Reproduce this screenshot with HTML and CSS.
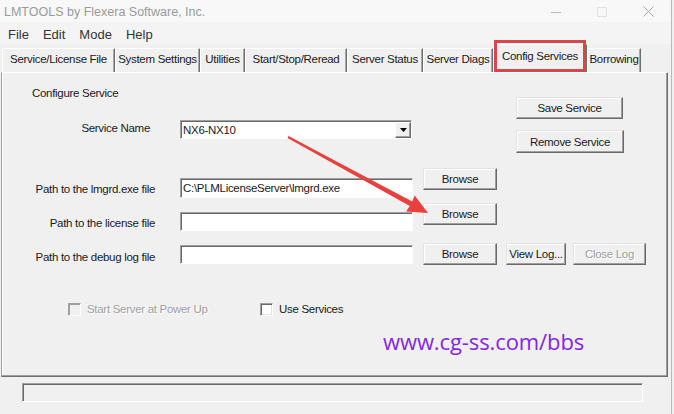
FILE: index.html
```html
<!DOCTYPE html>
<html lang="en">
<head>
<meta charset="utf-8">
<title>LMTOOLS</title>
<link rel="stylesheet" href="styles.css">
</head>
<body>
<div class="window">
  <header class="titlebar">
    <span class="title">LMTOOLS by Flexera Software, Inc.</span>
    <div class="controls">
      <span class="ctl"><svg width="10" height="10" viewBox="0 0 10 10"><line x1="0" y1="5.5" x2="10" y2="5.5" stroke="#b8b8b8" stroke-width="1"/></svg></span>
      <span class="ctl"><svg width="10" height="10" viewBox="0 0 10 10"><rect x="0.5" y="0.5" width="9" height="9" fill="none" stroke="#e2e2e2" stroke-width="1"/></svg></span>
      <span class="ctl"><svg width="11" height="11" viewBox="0 0 11 11"><path d="M0.5 0.5 L10.5 10.5 M10.5 0.5 L0.5 10.5" stroke="#a8a8a8" stroke-width="1" fill="none"/></svg></span>
    </div>
  </header>
  <nav class="menubar">
    <span class="menu-item">File</span>
    <span class="menu-item">Edit</span>
    <span class="menu-item">Mode</span>
    <span class="menu-item">Help</span>
  </nav>
  <div class="tabs">
    <div class="tab">Service/License File</div>
    <div class="tab">System Settings</div>
    <div class="tab">Utilities</div>
    <div class="tab">Start/Stop/Reread</div>
    <div class="tab">Server Status</div>
    <div class="tab">Server Diags</div>
    <div class="tab tab-active">Config Services</div>
    <div class="tab">Borrowing</div>
  </div>
  <section class="panel">
    <div class="top">
      <div class="top-left">
        <div class="heading">Configure Service</div>
        <div class="service-row">
          <span class="lbl lbl-service">Service Name</span>
          <div class="combo">
            <span class="combo-text">NX6-NX10</span>
            <span class="combo-btn"><svg width="7" height="4" viewBox="0 0 7 4"><path d="M0 0H7L3.5 4Z" fill="#000"/></svg></span>
          </div>
        </div>
      </div>
      <div class="top-right">
        <div class="btn btn-save">Save Service</div>
        <div class="btn btn-remove">Remove Service</div>
      </div>
    </div>
    <div class="path-row row1">
      <span class="lbl">Path to the lmgrd.exe file</span>
      <div class="field">C:\PLMLicenseServer\lmgrd.exe</div>
      <div class="btn btn-browse">Browse</div>
    </div>
    <div class="path-row row2">
      <span class="lbl">Path to the license file</span>
      <div class="field"></div>
      <div class="btn btn-browse">Browse</div>
    </div>
    <div class="path-row row3">
      <span class="lbl">Path to the debug log file</span>
      <div class="field"></div>
      <div class="btn btn-browse">Browse</div>
      <div class="btn btn-view">View Log...</div>
      <div class="btn btn-close btn-disabled">Close Log</div>
    </div>
    <div class="check-row">
      <label class="check-item check-item-first disabled"><span class="check check-disabled"></span><span class="check-text">Start Server at Power Up</span></label>
      <label class="check-item"><span class="check"></span><span class="check-text">Use Services</span></label>
    </div>
    <div class="watermark">www.cg-ss.com/bbs</div>
  </section>
  <footer class="statusbar"><div class="status-box"></div></footer>
  <svg class="annot" width="674" height="414" viewBox="0 0 674 414">
    <polygon points="288.5,136.1 412.2,201.6 414.7,195.6 428,213 406.1,211.4 409.8,206.0 287.5,137.9" fill="#e8403c"/>
  </svg>
</div>
</body>
</html>
```

FILE: styles.css
```css
* { box-sizing: border-box; }
html, body { margin: 0; padding: 0; }
body {
  width: 674px;
  height: 414px;
  overflow: hidden;
  background: #f0f0f0;
  font-family: "Liberation Sans", Arial, sans-serif;
  font-size: 11.5px;
  letter-spacing: -0.3px;
  color: #1a1a1a;
}
.window {
  position: relative;
  width: 672px;
  height: 414px;
  background: #f0f0f0;
  border-right: 1px solid #b9b9b9;
  display: flex;
  flex-direction: column;
}
/* title bar */
.titlebar {
  height: 22px;
  background: #f8f8f8;
  display: flex;
  align-items: center;
  padding: 1px 0 0 4px;
}
.title {
  flex: 1;
  font-size: 12.5px;
  letter-spacing: 0;
  color: #9a9a9a;
}
.controls { display: flex; }
.ctl {
  width: 46px;
  height: 21px;
  display: flex;
  align-items: center;
  justify-content: center;
}
/* menu */
.menubar {
  height: 22px;
  background: #f4f4f4;
  display: flex;
  align-items: center;
  padding: 2px 0 0 1px;
  font-size: 13px;
  letter-spacing: 0;
  color: #333;
}
.menu-item { padding: 0 7px; }
/* tabs */
.tabs {
  height: 28px;
  display: grid;
  grid-template-columns: 113px 85px 45px 102px 76px 70px 94px 54px;
  align-items: end;
  padding-left: 2px;
}
.tab {
  height: 24px;
  line-height: 21px;
  text-align: center;
  white-space: nowrap;
  border-top: 1px solid #fff;
  border-left: 1px solid #fff;
  border-right: 1px solid #6e6e6e;
  box-shadow: inset -1px 0 #a8a8a8;
}
.tab-active {
  position: relative;
  height: 28px;
  line-height: 22px;
}
.tab-active::after {
  content: "";
  position: absolute;
  left: 0;
  right: 0;
  top: -5px;
  bottom: 0;
  border: 3px solid #d8464a;
}
/* panel */
.panel {
  margin-left: 1px;
  width: 667px;
  height: 305px;
  border: 1px solid;
  border-color: #fff #6e6e6e #6e6e6e #a0a0a0;
  box-shadow: inset -1px -1px #a0a0a0, inset 1px 0 #fff;
  display: flex;
  flex-direction: column;
  padding-left: 1px;
}
.top {
  display: flex;
  height: 80px;
}
.top-left { width: 513px; }
.heading {
  margin: 13px 0 0 29px;
  line-height: 14px;
}
.service-row {
  margin-top: 20px;
  display: flex;
  align-items: flex-start;
}
.lbl {
  line-height: 14px;
  text-align: right;
  white-space: nowrap;
}
.lbl-service { width: 147px; margin-top: 1px; }
.combo {
  margin-left: 30px;
  width: 232px;
  height: 19px;
  background: #fff;
  display: flex;
  align-items: center;
  justify-content: space-between;
  border: 1px solid;
  border-color: #a0a0a0 #fff #fff #a0a0a0;
  box-shadow: inset 1px 1px #696969;
  padding-left: 2px;
}
.combo-btn {
  width: 16px;
  height: 16px;
  display: flex;
  align-items: center;
  justify-content: center;
  background: #f0f0f0;
  border: 1px solid;
  border-color: #fff #696969 #696969 #fff;
  box-shadow: inset -1px -1px #a0a0a0;
}
.top-right {
  padding-top: 24px;
  display: flex;
  flex-direction: column;
}
.btn {
  height: 22px;
  display: flex;
  align-items: center;
  justify-content: center;
  white-space: nowrap;
  background: #f0f0f0;
  border: 1px solid;
  border-color: #e3e3e3 #696969 #696969 #e3e3e3;
  box-shadow: inset -1px -1px #a0a0a0, inset 1px 1px #fff;
}
.btn-save { width: 107px; height: 22px; }
.btn-remove { width: 108px; margin-top: 11px; height: 23px; }
.btn-disabled {
  color: #a0a0a0;
  text-shadow: 1px 1px #fff;
}
/* path rows */
.path-row {
  display: flex;
  align-items: flex-start;
}
.path-row .lbl { width: 152px; }
.field {
  margin-left: 25px;
  width: 233px;
  height: 19px;
  line-height: 17px;
  padding-left: 2px;
  background: #fff;
  white-space: nowrap;
  border: 1px solid;
  border-color: #a0a0a0 #fff #fff #a0a0a0;
  box-shadow: inset 1px 1px #696969;
}
.btn-browse { margin-left: 10px; width: 74px; }
.btn-view { margin-left: 9px; width: 60px; }
.btn-close { margin-left: 7px; width: 73px; }
.row1 { margin-top: 15px; height: 35px; }
.row1 .lbl { margin-top: 14px; }
.row1 .field { margin-top: 10px; height: 20px; line-height: 18px; }
.row2 { height: 40px; }
.row2 .lbl { margin-top: 13px; }
.row2 .field { margin-top: 9px; }
.row3 { height: 22px; }
.row3 .lbl { margin-top: 7px; }
.row3 .field { margin-top: 2px; }
/* checkboxes */
.check-row {
  margin-top: 37px;
  height: 14px;
  display: flex;
  align-items: center;
}
.check-item {
  display: flex;
  align-items: center;
}
.check-item-first {
  margin-left: 65px;
  width: 192px;
}
.check {
  width: 13px;
  height: 13px;
  background: #fff;
  border: 1px solid;
  border-color: #a0a0a0 #fff #fff #a0a0a0;
  box-shadow: inset 1px 1px #696969, inset -1px -1px #e3e3e3;
}
.check-disabled {
  background: #f0f0f0;
  box-shadow: inset 1px 1px #a0a0a0;
}
.check-text { margin-left: 6px; line-height: 14px; }
.disabled .check-text {
  color: #a0a0a0;
  text-shadow: 1px 1px #fff;
}
/* watermark */
.watermark {
  margin: 10px 0 0 380px;
  font-family: "Open Sans", "Noto Sans", sans-serif;
  font-size: 22px;
  letter-spacing: -0.1px;
  line-height: 30px;
  color: #8427e0;
}
/* status bar */
.statusbar {
  padding: 6px 0 0 22px;
}
.status-box {
  width: 621px;
  height: 19px;
  border: 1px solid;
  border-color: #a0a0a0 #fff #fff #a0a0a0;
  box-shadow: inset 1px 1px #696969;
}
.annot {
  position: absolute;
  left: 0;
  top: 0;
  pointer-events: none;
}
```
